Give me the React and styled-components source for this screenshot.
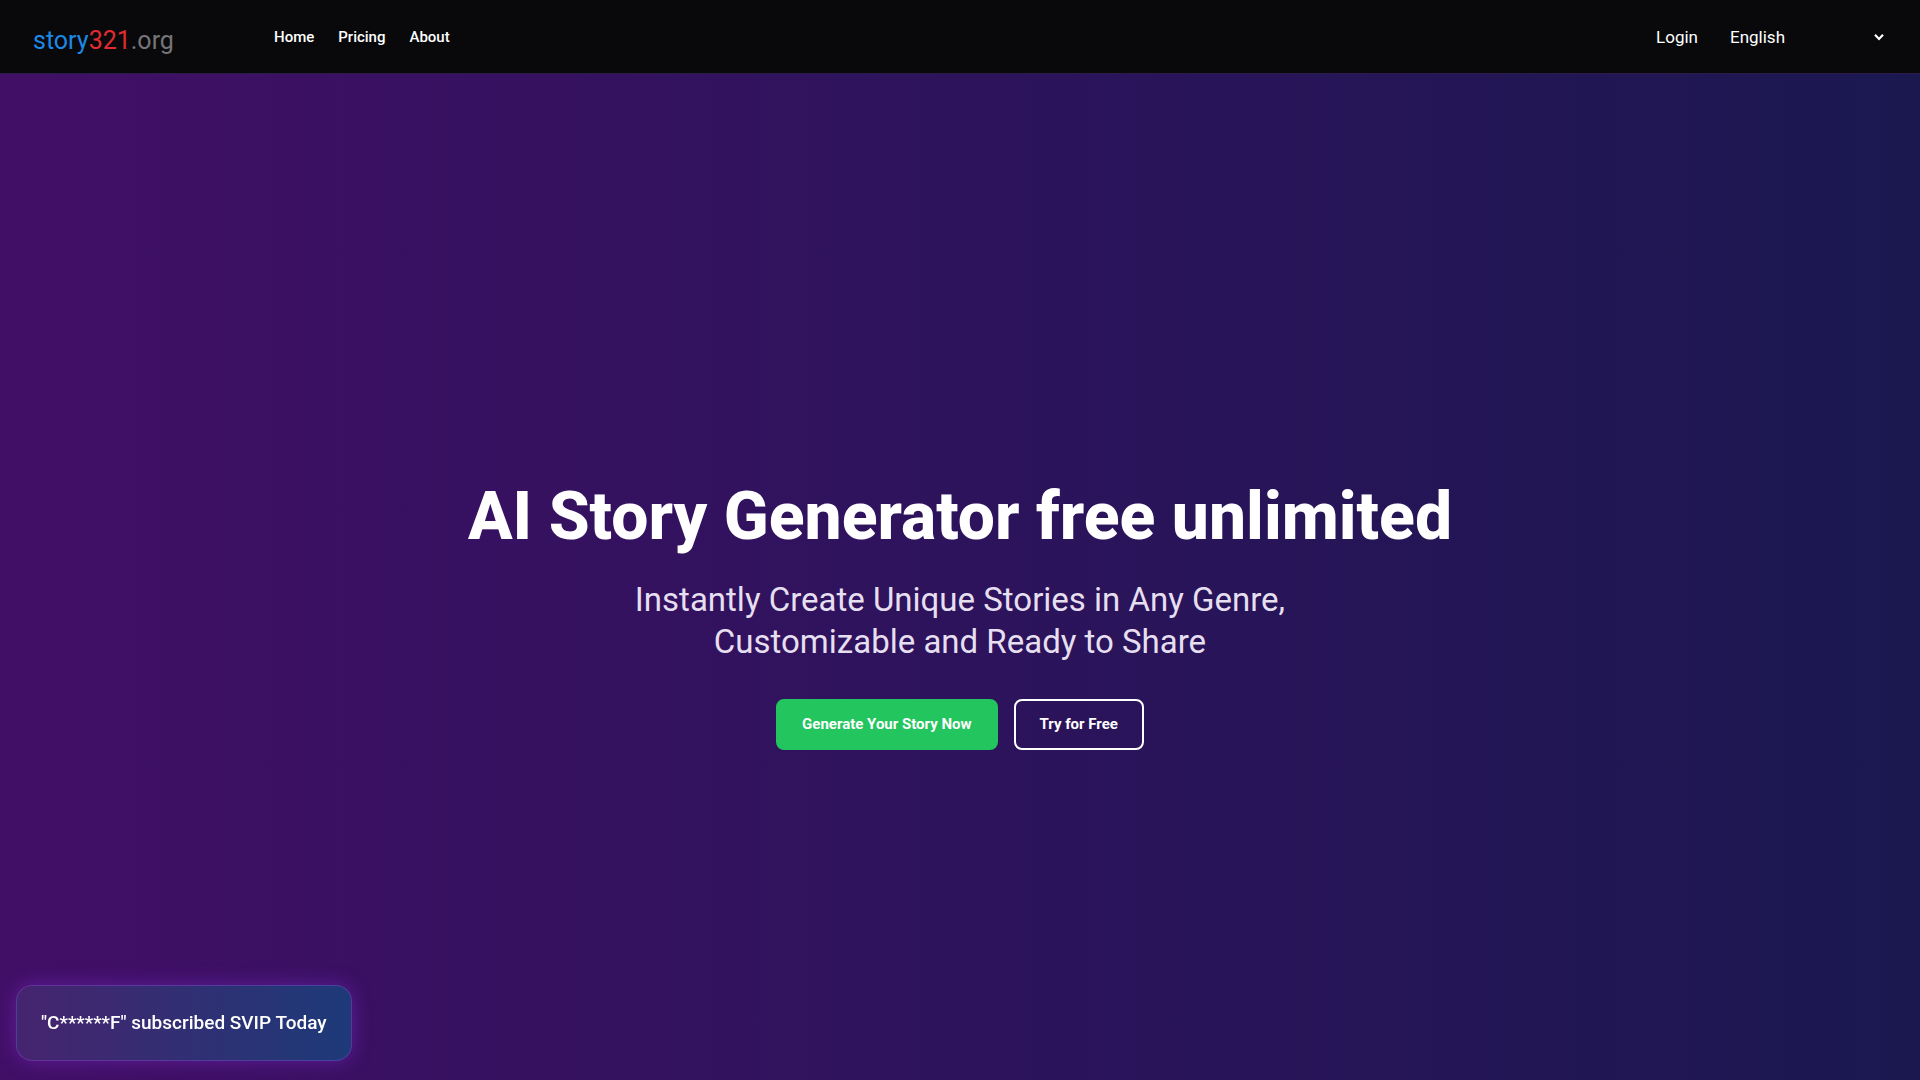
import React, { useState } from 'react'
import styled, { createGlobalStyle, css } from 'styled-components'

const links = ['Home', 'Pricing', 'About']
const languages = ['English', 'Deutsch', 'Español', 'Français']

const App = () => {
    const [language, setLanguage] = useState('English')

    return (
        <>
            <GlobalStyle />
            <Page>
                <Header>
                    <Logo href="#">
                        <LogoPart $color="#1e88e5">story</LogoPart>
                        <LogoPart $color="#e02b30">321</LogoPart>
                        <LogoPart $color="#75757a">.org</LogoPart>
                    </Logo>
                    <Nav>
                        {links.map(link => (
                            <NavLink href="#" key={link}>{link}</NavLink>
                        ))}
                    </Nav>
                    <Account>
                        <Login href="#">Login</Login>
                        <SelectWrap>
                            <Select
                                aria-label="Language"
                                value={language}
                                onChange={e => setLanguage(e.target.value)}
                            >
                                {languages.map(l => <option key={l}>{l}</option>)}
                            </Select>
                            <Chevron viewBox="0 0 10 8" aria-hidden="true">
                                <path d="M1 1.8l4 4.2 4-4.2" />
                            </Chevron>
                        </SelectWrap>
                    </Account>
                </Header>
                <Hero>
                    <Title>AI Story Generator free unlimited</Title>
                    <Subtitle>Instantly Create Unique Stories in Any Genre, Customizable and Ready to Share</Subtitle>
                    <Actions>
                        <Button type="button" $primary>Generate Your Story Now</Button>
                        <Button type="button">Try for Free</Button>
                    </Actions>
                </Hero>
                <Toast role="status">"C******F" subscribed SVIP Today</Toast>
            </Page>
        </>
    )
}

const GlobalStyle = createGlobalStyle`
    * {
        box-sizing: border-box;
    }

    body {
        margin: 0;
        background: #1b1850;
        color: #fff;
        font-family: Roboto, "Liberation Sans", sans-serif;
    }
`
const Page = styled.div`
    min-height: 100vh;
    display: flex;
    flex-direction: column;
    background: linear-gradient(to right, #410f66, #2d135c 50%, #1b1850);
`
const Header = styled.header`
    height: 74px;
    display: flex;
    align-items: center;
    padding: 0 32px;
    background: #09090b;
    border-bottom: 1px solid #2c1c4a;
`
const Logo = styled.a`
    width: 242px;
    padding: 8px 0 0 1px;
    font-size: 25px;
    line-height: 32px;
    text-decoration: none;
`
const LogoPart = styled.span`
    color: ${props => props.$color};
`
const Nav = styled.nav`
    display: flex;
    gap: 24px;
`
const NavLink = styled.a`
    color: #fff;
    font-size: 15px;
    line-height: 24px;
    font-weight: 500;
    text-decoration: none;
`
const Account = styled.div`
    display: flex;
    align-items: center;
    gap: 32px;
    margin-left: auto;
`
const Login = styled.a`
    color: #fff;
    font-size: 17px;
    line-height: 24px;
    text-decoration: none;
`
const SelectWrap = styled.div`
    position: relative;
    width: 158px;
`
const Select = styled.select`
    width: 100%;
    appearance: none;
    border: none;
    padding: 0;
    background: transparent;
    color: #fff;
    font-family: inherit;
    font-size: 17px;
    line-height: 24px;

    option {
        color: #111;
    }
`
const Chevron = styled.svg`
    position: absolute;
    right: 4px;
    top: 8px;
    width: 10px;
    height: 8px;
    fill: none;
    stroke: #fff;
    stroke-width: 2.2;
    pointer-events: none;
`
const Hero = styled.main`
    flex: 1;
    display: flex;
    flex-direction: column;
    align-items: center;
    justify-content: center;
    padding: 74px 16px 0;
    text-align: center;
`
const Title = styled.h1`
    margin: 0 0 24px;
    font-size: 66px;
    line-height: 76px;
    font-weight: 800;
`
const Subtitle = styled.p`
    max-width: 720px;
    margin: 0 0 36px;
    color: #e6dff0;
    font-size: 33px;
    line-height: 42px;
`
const Actions = styled.div`
    display: flex;
    gap: 16px;
`
const Button = styled.button`
    height: 51px;
    padding: 0 24px;
    border: 2px solid #fff;
    border-radius: 8px;
    background: transparent;
    color: #fff;
    font-family: inherit;
    font-size: 15px;
    font-weight: 700;
    cursor: pointer;

    ${props => props.$primary && css`
        border-color: #22c55e;
        background: #22c55e;
    `}
`
const Toast = styled.div`
    position: fixed;
    left: 16px;
    bottom: 19px;
    padding: 23px 24px;
    border: 1px solid rgba(168, 85, 247, 0.3);
    border-radius: 16px;
    background: linear-gradient(to right, #46246f, #1d3a78);
    box-shadow: 0 0 20px rgba(147, 51, 234, 0.4);
    font-size: 19px;
    line-height: 28px;
    font-weight: 500;
`

export default App
